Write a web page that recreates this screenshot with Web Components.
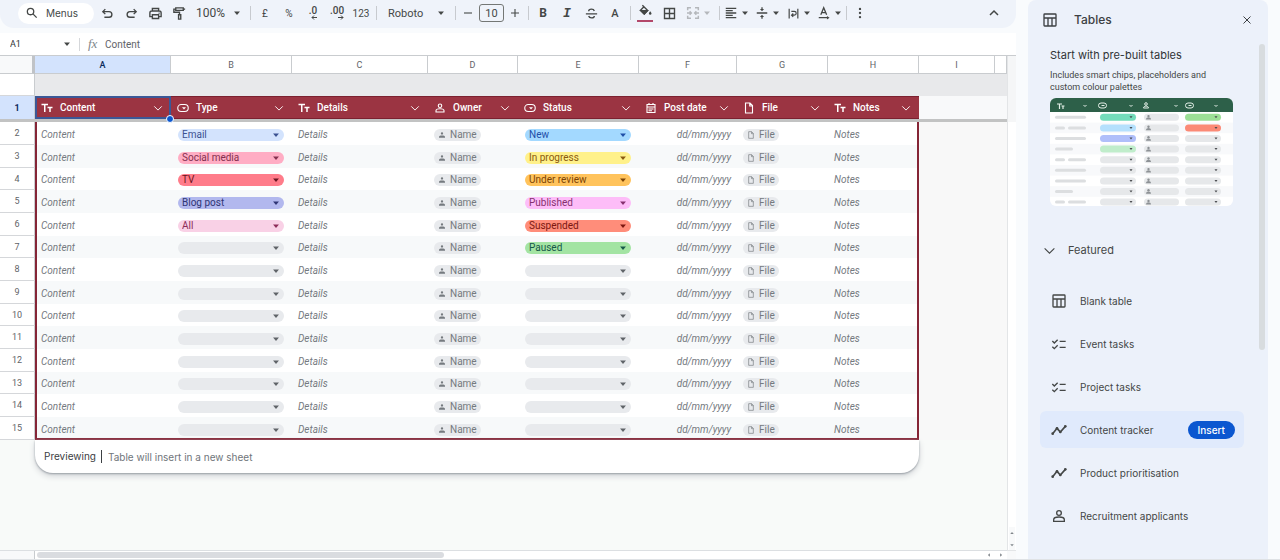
<!DOCTYPE html>
<html lang="en-GB">
<head>
<meta charset="utf-8">
<meta name="viewport" content="width=device-width, initial-scale=1">
<title>Content tracker – Sheets</title>
<style>
  html, body { margin: 0; }
  body { background: #f9fbfd; font-family: Roboto, "Liberation Sans", sans-serif; color: #3c4043; }
</style>
</head>
<body>
<sheets-app></sheets-app>

<script>
/* Icon drawings on a 24-unit grid; stroked unless a shape sets its own fill. */
const ICONS = {
  search: '<circle cx="9.5" cy="9.5" r="5.5"/><path d="m14 14 6 6"/>',
  undo: '<path d="M8.5 5 4.500 9l4 4M5 9h9.500a4.500 4.500 0 0 1 0 9H7"/>',
  redo: '<path d="m15.500 5 4 4-4 4M19 9H9.500a4.500 4.500 0 0 0 0 9H17"/>',
  print: '<path d="M7 8V4h10v4M7 17H3v-6a3 3 0 0 1 3-3h12a3 3 0 0 1 3 3v6h-4M7 14h10v6H7z"/><path d="M17 11.500h1.500"/>',
  roller: '<path d="M6 3h12v4H6zM6 5H3v5h9v4M10.500 14h3.500v7h-3.500z"/><path d="M18 5h3"/>',
  down: '<path d="M5 8.500h14l-7 8z" fill="currentColor" stroke="none"/>',
  strike: '<path d="M3 12.500h18M16.500 8c-.5-2-2-3-4.500-3s-4.500 1.200-4.500 3.200M7.500 16c.5 2 2 3 4.500 3s4.500-1.200 4.500-3"/>',
  fill: '<path d="m7 2 8.500 8.500-5.500 5.500-6-6L9.500 4.500" /><path d="M4.500 10.500h10.500L10 16z" fill="currentColor"/><path d="M19.500 11.500s-2 2.300-2 3.500a2 2 0 0 0 4 0c0-1.200-2-3.500-2-3.500z" fill="currentColor" stroke="none"/>',
  borders: '<path d="M4 4h16v16H4zM12 4v16M4 12h16"/>',
  merge: '<path d="M9 4H4v4M15 4h5v4M9 20H4v-4M15 20h5v-4M3 12h6M21 12h-6M7 9.500 9.500 12 7 14.500M17 9.500 14.500 12l2.500 2.500"/>',
  left: '<path d="M3 4h18M3 8h12M3 12h18M3 16h12M3 20h18"/>',
  middle: '<path d="M3 12h18M12 2v4M12 22v-4"/><path d="M8.500 5h7L12 9zM8.500 19h7L12 15z" fill="currentColor" stroke="none"/>',
  wrap: '<path d="M4 3v18M20 3v18M8 8h5.500a3 3 0 0 1 0 7H9M11.500 12 8.500 15l3 3"/>',
  rotate: '<path d="m6.500 15 5-12 5 12M8.200 11.500h6.600M3 20h16"/><path d="m17 17 4.500 3-4.500 3z" fill="currentColor" stroke="none"/>',
  more: '<g fill="currentColor" stroke="none"><circle cx="12" cy="5" r="2"/><circle cx="12" cy="12" r="2"/><circle cx="12" cy="19" r="2"/></g>',
  up: '<path d="m6 15 6-6 6 6"/>',
  chevron: '<path d="m3 8 9 9 9-9"/>',
  close: '<path d="m5 5 14 14M19 5 5 19"/>',
  plus: '<path d="M12 4v16M4 12h16"/>',
  minus: '<path d="M4 12h16"/>',
  text: '<path d="M1 5h13M7.500 5v15M13 11h10M18 11v9" stroke-width="3"/>',
  chip: '<rect x="1.500" y="5" width="21" height="14" rx="7"/><path d="M10 10.500h8l-4 4.500z" fill="currentColor" stroke="none"/>',
  person: '<circle cx="12" cy="7.500" r="3.500"/><path d="M4 20v-2.500c0-2.500 4-4 8-4s8 1.500 8 4V20z"/>',
  personSmall: '<circle cx="12" cy="7.500" r="3.500" fill="currentColor" stroke="none"/><path d="M3 20v-3c0-2.500 4-3.500 9-3.500s9 1 9 3.500v3z" fill="currentColor" stroke="none"/>',
  calendar: '<path d="M4 5h16v16H4zM4 10h16M8 2v4M16 2v4M7 14h10M7 17.500h7"/>',
  file: '<path d="M14 2H5v20h14V7zM13.500 2.500V8H19"/>',
  table: '<path d="M4 3h16a1 1 0 0 1 1 1v16a1 1 0 0 1-1 1H4a1 1 0 0 1-1-1V4a1 1 0 0 1 1-1zM3 9h18M9 9v12M15 9v12"/>',
  tasks: '<path d="m2 7.500 3 3L10 5.500M2 16l3 3 5-5M13 8h9M13 17h9"/>',
  trend: '<path d="m2.500 17.500 6.500-8 5 5.500 7.500-8.500" stroke-width="2.500"/><g fill="currentColor" stroke="none"><circle cx="2.500" cy="17.500" r="2"/><circle cx="9" cy="9.500" r="2"/><circle cx="14" cy="15" r="2"/><circle cx="21.500" cy="6.500" r="2"/></g>'
};

/* Base class: renders a template into an open shadow root. */
class View extends HTMLElement {
  connectedCallback() {
    if (this.shadowRoot) return;
    const tpl = document.createElement('template');
    tpl.innerHTML = this.render();
    this.attachShadow({ mode: 'open' }).append(tpl.content.cloneNode(true));
  }
}

/* <ui-icon name size> */
customElements.define('ui-icon', class extends View {
  render() {
    const size = this.getAttribute('size') || 16;
    return `<style>
      :host { display: inline-flex; flex: none; }
      svg { display: block; fill: none; stroke: currentColor; stroke-width: var(--icon-stroke, 2); }
    </style>
    <svg width="${size}" height="${size}" viewBox="0 0 24 24" aria-hidden="true">${ICONS[this.getAttribute('name')]}</svg>`;
  }
});

/* <tool-button label [menu]> with its glyph in the slot */
customElements.define('tool-button', class extends View {
  render() {
    const menu = this.hasAttribute('menu');
    return `<style>
      :host { display: block; flex: none; }
      button { display: flex; align-items: center; justify-content: center; width: ${menu ? 'auto' : 'var(--tool-width, 24px)'}; height: 24px;
        margin: 0; padding: 0; border: 0; background: none; color: inherit; font: inherit; }
      span { display: flex; justify-content: center; align-items: center; min-width: ${menu ? '18px' : '0'}; }
    </style>
    <button type="button" aria-label="${this.getAttribute('label')}"><span><slot></slot></span>${menu ? '<ui-icon name="down" size="10"></ui-icon>' : ''}</button>`;
  }
});

/* <tool-select label value>: a drop-down of the toolbar */
customElements.define('tool-select', class extends View {
  render() {
    return `<style>
      :host { display: grid; align-items: center; flex: none; }
      select, ui-icon { grid-area: 1 / 1; }
      select { appearance: none; width: 100%; height: 24px; margin: 0; padding: 0; border: 0; background: none; color: inherit; font: inherit; }
      ui-icon { justify-self: end; pointer-events: none; }
    </style>
    <select aria-label="${this.getAttribute('label')}"><option>${this.getAttribute('value')}</option></select>
    <ui-icon name="down" size="10"></ui-icon>`;
  }
});

customElements.define('tool-bar', class extends View {
  render() {
    return `<style>
      :host { display: flex; align-items: center; box-sizing: border-box; height: 28px; padding: 0 12px 2px 18px;
        background: #eff3fa; border-radius: 0 0 14px 14px; color: #444746; font-size: 11px; --icon-stroke: 2.200; }
      .menus { display: flex; align-items: center; gap: 7px; width: 76px; height: 21px; margin-right: 1px; padding: 0 7px;
        border: 0; border-radius: 11px; background: #fff; color: inherit; font: 10px Inter, sans-serif; }
      .sep { flex: none; width: 1px; height: 14px; margin: 0 2px 0 3px; background: #c7cacf; }
      .zoom { box-sizing: border-box; width: 56px; padding: 0 5px 0 5px; font: 12px Roboto, sans-serif; }
      .font { box-sizing: border-box; width: 73px; padding: 0 6px 0 9px; font-size: 11px; }
      .step { --tool-width: 20px; }
      .size { width: 25px; height: 18px; box-sizing: border-box; margin: 0 1px; padding: 0; border: 1px solid #747775; border-radius: 3px;
        background: none; color: inherit; font: 11px Roboto, sans-serif; text-align: center; }
      b { font-size: 12px; }
      .serif { font: italic bold 13px "Liberation Mono", monospace; }
      .letter { font-weight: 500; }
      .num { font-size: 10px; }
      .dec { display: grid; font: 500 10px/8px Roboto, sans-serif; }
      .dec svg { justify-self: end; }
      .swatch { display: grid; justify-items: center; gap: 1px; }
      .swatch::after { content: ""; width: 16px; height: 2px; background: #b3486a; }
      .disabled { color: #b4b7bb; padding-left: 3px; width: 32px; }
      .menu { margin-right: 3px; }
      .menu.last { margin-right: 0; }
      .more { --tool-width: 22px; }
      .collapse { margin-left: auto; --tool-width: 20px; }
    </style>
    <button class="menus" type="button"><ui-icon name="search" size="14"></ui-icon><span>Menus</span></button>
    <tool-button label="Undo"><ui-icon name="undo" size="15"></ui-icon></tool-button>
    <tool-button label="Redo"><ui-icon name="redo" size="15"></ui-icon></tool-button>
    <tool-button label="Print"><ui-icon name="print" size="15"></ui-icon></tool-button>
    <tool-button label="Paint format"><ui-icon name="roller" size="15"></ui-icon></tool-button>
    <tool-select class="zoom" label="Zoom" value="100%"></tool-select>
    <span class="sep"></span>
    <tool-button label="Format as currency"><span class="num">£</span></tool-button>
    <tool-button label="Format as percent"><span class="num">%</span></tool-button>
    <tool-button label="Decrease decimal places"><span class="dec">.0<svg width="6" height="5" viewBox="0 0 6 5"><path d="M6 2.500H1M3 .5l-2 2 2 2" fill="none" stroke="currentColor"/></svg></span></tool-button>
    <tool-button label="Increase decimal places"><span class="dec">.00<svg width="6" height="5" viewBox="0 0 6 5"><path d="M0 2.500h5M3 .5l2 2-2 2" fill="none" stroke="currentColor"/></svg></span></tool-button>
    <tool-button label="More formats"><span class="num">123</span></tool-button>
    <span class="sep"></span>
    <tool-select class="font" label="Font" value="Roboto"></tool-select>
    <span class="sep"></span>
    <tool-button class="step" label="Decrease font size"><ui-icon name="minus" size="12"></ui-icon></tool-button>
    <input class="size" aria-label="Font size" value="10">
    <tool-button class="step" label="Increase font size"><ui-icon name="plus" size="12"></ui-icon></tool-button>
    <span class="sep"></span>
    <tool-button label="Bold"><b>B</b></tool-button>
    <tool-button label="Italic"><span class="serif">I</span></tool-button>
    <tool-button label="Strikethrough"><ui-icon name="strike" size="15"></ui-icon></tool-button>
    <tool-button label="Text colour"><span class="letter">A</span></tool-button>
    <span class="sep"></span>
    <tool-button label="Fill colour"><span class="swatch"><ui-icon name="fill" size="15"></ui-icon></span></tool-button>
    <tool-button label="Borders"><ui-icon name="borders" size="15"></ui-icon></tool-button>
    <tool-button class="disabled" menu label="Merge cells"><ui-icon name="merge" size="16"></ui-icon></tool-button>
    <span class="sep"></span>
    <tool-button class="menu" menu label="Horizontal align"><ui-icon name="left" size="14"></ui-icon></tool-button>
    <tool-button class="menu" menu label="Vertical align"><ui-icon name="middle" size="14"></ui-icon></tool-button>
    <tool-button class="menu" menu label="Text wrapping"><ui-icon name="wrap" size="13"></ui-icon></tool-button>
    <tool-button class="menu last" menu label="Text rotation"><ui-icon name="rotate" size="14"></ui-icon></tool-button>
    <span class="sep"></span>
    <tool-button class="more" label="More"><ui-icon name="more" size="14"></ui-icon></tool-button>
    <tool-button class="collapse" label="Hide the menus"><ui-icon name="up" size="16"></ui-icon></tool-button>`;
  }
});

customElements.define('formula-bar', class extends View {
  render() {
    return `<style>
      :host { display: flex; align-items: center; box-sizing: border-box; height: 23px; margin-top: 5px; padding: 0 10px;
        background: #fff; border-bottom: 1px solid #c9cccf; color: #444746; }
      input { min-width: 0; margin: 0; padding: 0; border: 0; background: none; color: #5f6368; font: 10px Roboto, sans-serif; }
      .name { width: 52px; font-size: 9px; color: #303336; }
      .sep { width: 1px; height: 13px; margin: 0 8px 0 7px; background: #d5d7da; }
      .fx { width: 17px; font: italic 13px "Liberation Serif", serif; color: #80868b; }
      .value { flex: 1; }
    </style>
    <input class="name" aria-label="Name box" value="A1">
    <ui-icon name="down" size="10"></ui-icon>
    <span class="sep"></span>
    <span class="fx">fx</span>
    <input class="value" aria-label="Formula" value="Content">`;
  }
});

/* <drop-chip value bg fg>: a cell's drop-down */
customElements.define('drop-chip', class extends View {
  render() {
    const value = this.getAttribute('value') || '';
    const bg = this.getAttribute('bg') || '#e8eaed';
    const fg = this.getAttribute('fg') || '#5f6368';
    return `<style>
      :host { display: grid; align-items: center; height: 12px; border-radius: 6px; background: ${bg}; color: ${fg}; }
      select, ui-icon { grid-area: 1 / 1; }
      select { appearance: none; width: 100%; height: 12px; margin: 0; padding: 0 16px 0 4px; border: 0; background: none; color: inherit; font: 10px/12px Roboto, sans-serif; }
      ui-icon { justify-self: end; margin-right: 3px; pointer-events: none; }
    </style>
    <select aria-label="${this.getAttribute('label')}"><option>${value}</option></select>
    <ui-icon name="down" size="10"></ui-icon>`;
  }
});

/* <smart-chip icon>: placeholder for a person or a file */
customElements.define('smart-chip', class extends View {
  render() {
    return `<style>
      :host { display: inline-flex; align-items: center; gap: 4px; height: 12px; padding: 0 4px; border-radius: 6px; background: #e8eaed; color: #757a7f; }
    </style>
    <ui-icon name="${this.getAttribute('icon')}" size="8"></ui-icon><slot></slot>`;
  }
});

/* <column-title icon>: heading of a table column */
customElements.define('column-title', class extends View {
  render() {
    return `<style>
      :host { display: flex; align-items: center; gap: 7px; padding: 0 8px 0 6px; --icon-stroke: 2.200; }
      span { flex: 1; }
      button { display: flex; padding: 0; margin: 0; border: 0; background: none; color: inherit; }
    </style>
    <ui-icon name="${this.getAttribute('icon')}" size="12"></ui-icon><span><slot></slot></span>
    <button type="button" aria-label="Column menu"><ui-icon name="chevron" size="10"></ui-icon></button>`;
  }
});

const COLUMNS = [
  ['A', 'Content', 'text'], ['B', 'Type', 'chip'], ['C', 'Details', 'text'], ['D', 'Owner', 'person'],
  ['E', 'Status', 'chip'], ['F', 'Post date', 'calendar'], ['G', 'File', 'file'], ['H', 'Notes', 'text']
];
const TYPES = [
  ['Email', '#d3e3fd', '#3b5191'], ['Social media', '#ffadc4', '#84304f'], ['TV', '#ff7c8a', '#6b1420'],
  ['Blog post', '#b2b8ee', '#2f3575'], ['All', '#f9d1e6', '#8d2c58']
];
const STATUSES = [
  ['New', '#a3d9ff', '#1f4fa8'], ['In progress', '#fff18a', '#8a5a10'], ['Under review', '#ffc35c', '#7c4305'],
  ['Published', '#fdbdf8', '#86306f'], ['Suspended', '#ff8d7a', '#7c1710'], ['Paused', '#a3e4a3', '#17594a']
];

customElements.define('sheet-grid', class extends View {
  render() {
    const drop = (label, entry) => entry
      ? `<drop-chip label="${label}" value="${entry[0]}" bg="${entry[1]}" fg="${entry[2]}"></drop-chip>`
      : `<drop-chip label="${label}"></drop-chip>`;
    const rows = Array.from({ length: 14 }, (_, i) => `<tr>
      <th scope="row">${i + 2}</th><td class="first">Content</td><td class="drop">${drop('Type', TYPES[i])}</td><td>Details</td>
      <td class="smart"><smart-chip icon="personSmall">Name</smart-chip></td><td class="drop">${drop('Status', STATUSES[i])}</td>
      <td class="date">dd/mm/yyyy</td><td class="smart"><smart-chip icon="file">File</smart-chip></td>
      <td class="last">Notes</td><td class="off" colspan="2"></td></tr>`).join('');
    return `<style>
      :host { display: block; background: #f8faf9; --frame: #852536; }
      table { width: 100%; table-layout: fixed; border-collapse: separate; border-spacing: 0; font-size: 10px; line-height: 12px; }
      th, td { box-sizing: border-box; padding: 0; text-align: left; font-weight: 400; }
      .n { width: 35px; } .w136 { width: 136px; } .w121 { width: 121px; } .w98 { width: 98px; } .w91 { width: 91px; } .w90 { width: 90px; } .w76 { width: 76px; }
      .letters > * { height: 18px; border: 0 solid #c9cccf; border-width: 0 1px 1px 0; background: #fff; text-align: center; font-size: 9px; color: #5f6368; }
      .letters > :first-child { border-right: 3px solid #c0c3c7; background: #f8f9fa; }
      .letters > .on { background: #d3e3fd; color: #0b2a5c; font-weight: 500; }
      .gap > * { height: 22px; background: #e8e9eb; }
      tr > th:first-child { border-right: 1px solid #c9cccf; }
      .gap > th:first-child { background: #fff; border-bottom: 1px solid #d5d7da; }
      .titles > * { height: 23px; background: #9b3442; color: #fff; font-weight: 500; border: solid #7b2130; border-width: 1px 0; }
      .titles > th:first-child { background: #d3e3fd; color: #0b2a5c; font-size: 9px; font-weight: 700; text-align: center; border-width: 0 1px 0 0; border-color: #c9cccf; }
      .titles > .off { background: #f8f9fa; border: 0; }
      .titles > .active { position: relative; border: 2px solid #3b5897; }
      .active column-title { margin: 0 -2px; }
      .active::after { content: ""; position: absolute; right: -5px; bottom: -6px; z-index: 1; width: 6px; height: 6px; border: 1px solid #fff; border-radius: 50%; background: #0b57d0; }
      .freeze > * { height: 3px; background: #c2c3c3; line-height: 0; font-size: 0; }
      tbody tr > * { height: 23px; background: #fff; }
      tbody tr:nth-child(3n) > * { height: 22px; }
      tbody tr:nth-child(even) > td { background: #f7f9fa; }
      tbody tr > th:first-child { text-align: center; font-size: 9px; color: #5f6368; border-bottom: 1px solid #d5d7da; }
      tbody td { padding: 2px 0 0 6px; font-style: italic; color: #757a7f; }
      tbody td.first { padding-left: 4px; border-left: 2px solid var(--frame); }
      tbody td.last { border-right: 2px solid var(--frame); }
      tbody td.drop { padding-right: 8px; padding-left: 7px; font-style: normal; }
      tbody td.smart { font-style: normal; }
      .smart smart-chip { vertical-align: middle; }
      tbody td.date { padding-right: 6px; padding-left: 0; text-align: right; }
      tbody tr:last-child > td:not(.off) { padding-top: 4px; border-bottom: 2px solid var(--frame); }
      tbody tr:nth-child(n) > td.off { background: #f8f8f8; border: 0; }
      .note { display: flex; align-items: center; box-sizing: border-box; max-width: 884px; height: 33px; margin-left: 35px; padding: 0 9px; background: #fff;
        border-radius: 0 0 18px 18px; box-shadow: 0 1px 2px #9aa0a6, 0 3px 6px #d0d3d6; font: 10px/14px Inter, sans-serif; color: #70757a; }
      .note strong { font-weight: 400; color: #3c4043; padding-right: 5px; margin-right: 6px; border-right: 1px solid #3c4043; line-height: 13px; }
    </style>
    <table>
      <colgroup><col class="n"><col class="w136"><col class="w121"><col class="w136"><col class="w90"><col class="w121"><col class="w98"><col class="w91"><col class="w91"><col class="w76"><col></colgroup>
      <thead>
        <tr class="letters"><th></th>${COLUMNS.map(([l], i) => `<th scope="col"${i ? '' : ' class="on"'}>${l}</th>`).join('')}<th scope="col">I</th><th></th></tr>
        <tr class="gap"><th></th><td colspan="10"></td></tr>
        <tr class="titles"><th scope="row">1</th>${COLUMNS.map(([, t, icon], i) => `<th scope="col"${i ? '' : ' class="active"'}><column-title icon="${icon}">${t}</column-title></th>`).join('')}<td class="off" colspan="2"></td></tr>
        <tr class="freeze"><td colspan="11"></td></tr>
      </thead>
      <tbody>${rows}</tbody>
    </table>
    <div class="note"><strong>Previewing</strong><span>Table will insert in a new sheet</span></div>`;
  }
});

/* Frame with the scroll tracks around the grid */
customElements.define('scroll-frame', class extends View {
  render() {
    return `<style>
      :host { display: grid; grid-template: 1fr 9px / minmax(0, 1fr) 9px; background: #f8faf9; }
      .v { display: flex; flex-direction: column; align-items: center; border-left: 1px solid #e3e5e7; background: #fff; color: #80868b; }
      .v::before { content: ""; width: 100%; height: 66px; background: #f5f6f7; }
      .v span { margin-top: auto; display: grid; gap: 6px; padding: 3px 0 2px; background: #f8f9fa; }
      .h { display: flex; align-items: center; border-top: 1px solid #dcdfe2; background: #fff; color: #80868b; }
      .h::before { content: ""; width: 34px; height: 100%; border-right: 1px solid #c9cccf; background: #f8f9fa; }
      .thumb { width: 43%; max-width: 407px; height: 6px; margin-left: 2px; border-radius: 3px; background: #dadce0; }
      .arrows { display: flex; gap: 6px; margin-left: auto; padding: 0 3px; }
      .turn { transform: rotate(90deg); } .back { transform: rotate(-90deg); } .flip { transform: rotate(180deg); }
      .corner { border-top: 1px solid #e3e5e7; background: #f8f9fa; }
    </style>
    <div><slot></slot></div>
    <div class="v"><span><ui-icon class="flip" name="down" size="6"></ui-icon><ui-icon name="down" size="6"></ui-icon></span></div>
    <div class="h"><div class="thumb"></div><div class="arrows"><ui-icon class="turn" name="down" size="6"></ui-icon><ui-icon class="back" name="down" size="6"></ui-icon></div></div>
    <div class="corner"></div>`;
  }
});

/* Illustration of a pre-built table */
customElements.define('table-preview', class extends View {
  render() {
    const bars = ['full', 'split', 'full', 'short', 'split', 'full', 'full', 'short', 'split'];
    const left = ['#74dcbb', '#b5e0fd', '#b0bffa', '#c0edcb'];
    const right = ['#9ce096', '#fb8a76'];
    const shapes = {
      full: '<rect x="5" y="-1.500" width="31" height="3" rx="1.500"/>',
      split: '<rect x="5" y="-1.500" width="10" height="3" rx="1.500"/><rect x="18" y="-1.500" width="18" height="3" rx="1.500"/>',
      short: '<rect x="5" y="-1.500" width="18" height="3" rx="1.500"/>'
    };
    const grey = '#e6e8ea';
    const rows = bars.map((kind, i) => `<g transform="translate(0 ${19.3 + i * 10.6})">
      ${i % 2 ? '<rect y="-5.300" width="183" height="10.600" fill="#f8f9fb"/>' : ''}
      <g fill="#dcdee0">${shapes[kind]}</g>
      <rect x="50" y="-3.500" width="36" height="7" rx="3.500" fill="${left[i] || grey}"/><path d="M79.500-1h3l-1.500 2z" fill="#4a4d50"/>
      <rect x="94" y="-3.500" width="35" height="7" rx="3.500" fill="${grey}"/><circle cx="98.500" cy="-1.200" r="1.200" fill="#8d9195"/><path d="M96 2.300c0-3 5-3 5 0z" fill="#8d9195"/>
      <rect x="135" y="-3.500" width="36" height="7" rx="3.500" fill="${right[i] || grey}"/><path d="M164.500-1h3l-1.500 2z" fill="#4a4d50"/></g>`).join('');
    return `<style>
      :host { display: block; }
      svg { display: block; width: 100%; border-radius: 6px; background: #fff; }
    </style>
    <svg viewBox="0 0 183 108" role="img" aria-label="Preview of a table">
      ${rows}
      <rect width="183" height="14" fill="#2d6049"/>
      <g fill="none" stroke="#e4efe8" stroke-width="1">
        <path d="M7 6h5M9.500 6v5M11.500 8h3M13 8v3" stroke-width="1.200"/>
        <path d="m33.500 7 1.500 1.500L36.500 7M79.500 7l1.500 1.500L82.500 7M124.500 7l1.500 1.500 1.500-1.500M164.500 7l1.500 1.500 1.500-1.500"/>
        <rect x="48.500" y="5" width="8" height="5" rx="2.500"/><rect x="135.500" y="5" width="8" height="5" rx="2.500"/>
        <circle cx="96" cy="6" r="1.300"/><path d="M93.500 10c0-2.600 5-2.600 5 0z"/>
        <path d="M51.500 7.500h3M138.500 7.500h3"/>
      </g>
    </svg>`;
  }
});

/* <panel-item icon [selected]> */
customElements.define('panel-item', class extends View {
  render() {
    return `<style>
      :host { display: flex; align-items: center; box-sizing: border-box; height: 37px; padding: 0 9px 0 11px; border-radius: 6px; font-size: 10px; }
      :host([selected]) { background: #e0eafc; }
      a { flex: 1; display: flex; align-items: center; gap: 13px; color: #444746; text-decoration: none; font: inherit; }
      button { height: 18px; padding: 0 10px; border: 0; border-radius: 9px; background: #0b57d0; color: #fff; font: 500 10px Inter, sans-serif; }
    </style>
    <a href="#"><ui-icon name="${this.getAttribute('icon')}" size="16"></ui-icon><slot></slot></a>
    ${this.hasAttribute('selected') ? '<button type="button">Insert</button>' : ''}`;
  }
});

customElements.define('side-panel', class extends View {
  render() {
    return `<style>
      :host { display: flex; flex-direction: column; background: #ecf1fa; border-radius: 8px 8px 0 0; color: #444746; font: 11px/14px Inter, sans-serif; }
      header { display: flex; align-items: center; gap: 16px; height: 39px; padding: 0 15px 0 14px; color: #3c4043; }
      h2 { flex: 1; margin: 0; font: 500 12px/16px Inter, sans-serif; }
      h3 { margin: 0 0 6px; font: 11px/16px Inter, sans-serif; color: #303336; }
      p { margin: 0 0 5px; font: 9px/12px Roboto, sans-serif; }
      button { display: flex; align-items: center; padding: 0; margin: 0; border: 0; background: none; color: inherit; font: inherit; }
      .body { display: flex; flex: 1; padding: 5px 3px 0 12px; }
      .list { flex: 1; min-width: 0; }
      .intro { padding: 3px 11px 0 10px; }
      .group { gap: 12px; height: 20px; margin: 34px 0 22px 3px; }
      nav { display: grid; gap: 6px; }
      .thumb { width: 6px; height: 306px; margin-left: 15px; border-radius: 3px; background: #d8dcdf; }
    </style>
    <header><ui-icon name="table" size="16"></ui-icon><h2>Tables</h2>
      <button type="button" aria-label="Close"><ui-icon name="close" size="12"></ui-icon></button></header>
    <div class="body">
      <div class="list">
        <div class="intro"><h3>Start with pre-built tables</h3>
          <p>Includes smart chips, placeholders and custom colour palettes</p>
          <table-preview></table-preview></div>
        <button class="group" type="button"><ui-icon name="chevron" size="13"></ui-icon><span>Featured</span></button>
        <nav>
          <panel-item icon="table">Blank table</panel-item>
          <panel-item icon="tasks">Event tasks</panel-item>
          <panel-item icon="tasks">Project tasks</panel-item>
          <panel-item icon="trend" selected>Content tracker</panel-item>
          <panel-item icon="trend">Product prioritisation</panel-item>
          <panel-item icon="person">Recruitment applicants</panel-item>
        </nav>
      </div>
      <div class="thumb"></div>
    </div>`;
  }
});

customElements.define('sheets-app', class extends View {
  render() {
    return `<style>
      :host { display: flex; box-sizing: border-box; min-height: 100vh; gap: 12px; padding-right: 12px; border-bottom: 1px solid #dfe2e5; }
      main { flex: 1; min-width: 0; display: flex; flex-direction: column; }
      scroll-frame { flex: 1; }
      side-panel { flex: none; width: 240px; }
    </style>
    <main><tool-bar></tool-bar><formula-bar></formula-bar><scroll-frame><sheet-grid></sheet-grid></scroll-frame></main>
    <side-panel></side-panel>`;
  }
});
</script>
</body>
</html>
